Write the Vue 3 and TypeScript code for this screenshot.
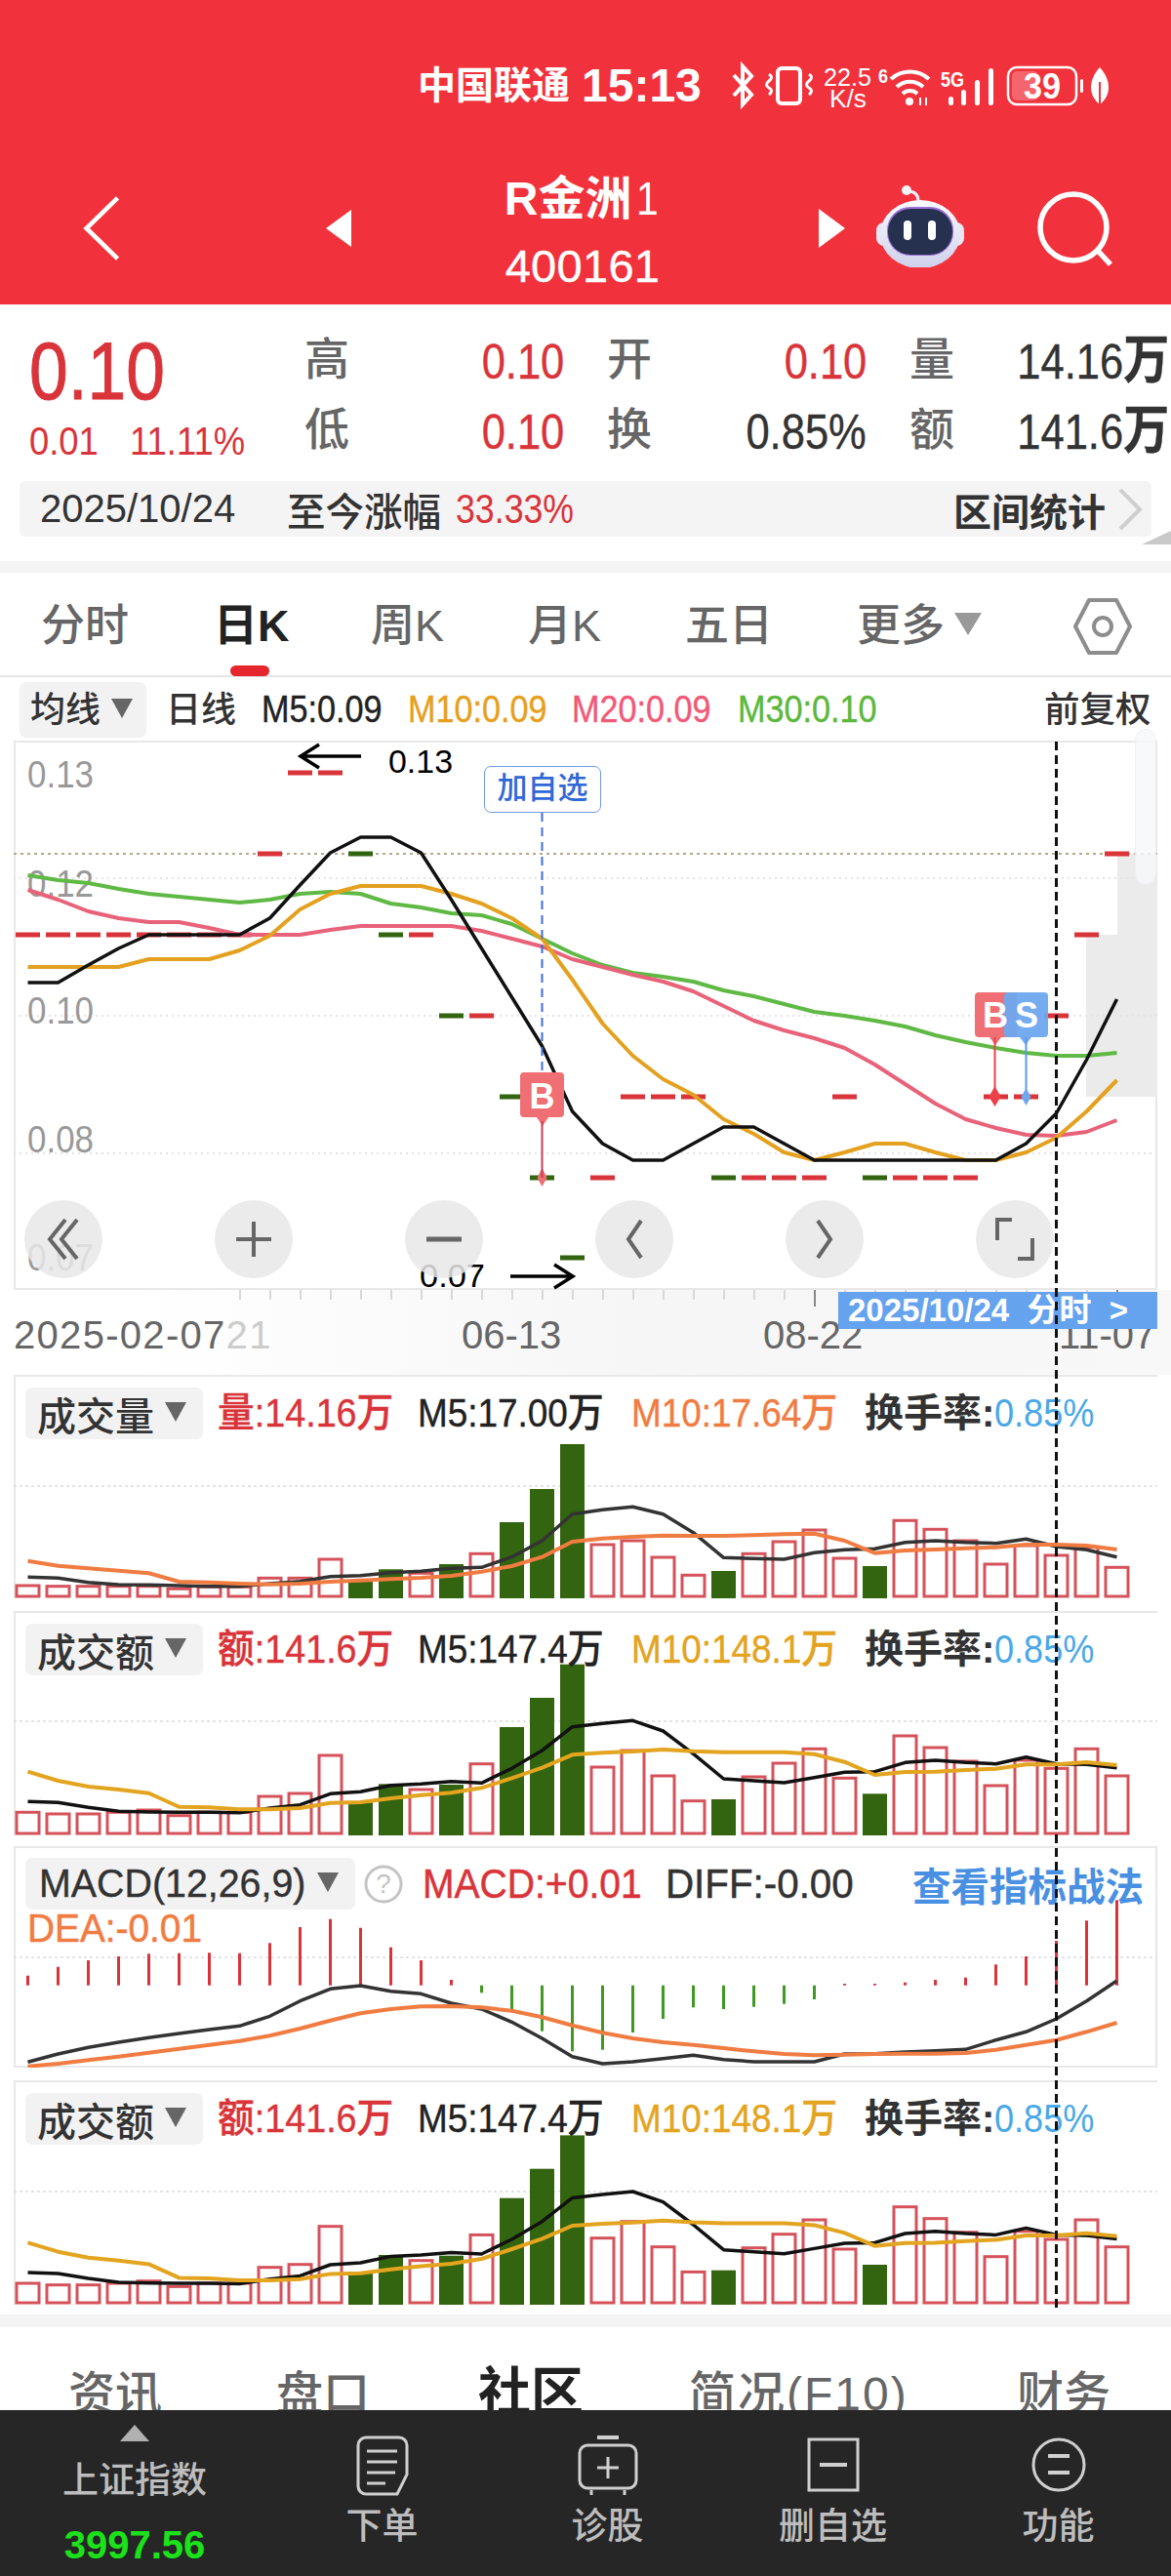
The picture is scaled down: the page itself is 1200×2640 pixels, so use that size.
<script setup lang="ts">
const xAt = (i: number) => 28.5 + 31 * i
const pts = (ys: number[]) => ys.map((y, i) => `${xAt(i)},${y}`).join(' ')
const zy = (base: number, shift = 0) => (v: number) => Math.round((base + v / 3 + shift) * 10) / 10

const levels = { p13: 793, p12: 876, p11: 959, p10: 1042, p09: 1125, p08: 1208, p07: 1290 }
const RED = '#d9343a'
const GRN = '#33640f'
const dashes: [number, number, string][] = [
  [levels.p13, 9, RED], [levels.p13, 10, RED],
  [levels.p12, 8, RED], [levels.p12, 11, GRN], [levels.p12, 36, RED],
  [levels.p11, 0, RED], [levels.p11, 1, RED], [levels.p11, 2, RED], [levels.p11, 3, RED], [levels.p11, 4, RED],
  [levels.p11, 5, RED], [levels.p11, 6, RED], [levels.p11, 7, RED], [levels.p11, 12, GRN], [levels.p11, 13, RED], [levels.p11, 35, RED],
  [levels.p10, 14, GRN], [levels.p10, 15, RED], [levels.p10, 34, RED],
  [levels.p09, 16, GRN], [levels.p09, 20, RED], [levels.p09, 21, RED], [levels.p09, 22, RED], [levels.p09, 27, RED], [levels.p09, 32, RED], [levels.p09, 33, RED],
  [levels.p08, 17, GRN], [levels.p08, 19, RED], [levels.p08, 23, GRN], [levels.p08, 24, RED], [levels.p08, 25, RED], [levels.p08, 26, RED],
  [levels.p08, 28, GRN], [levels.p08, 29, RED], [levels.p08, 30, RED], [levels.p08, 31, RED],
  [levels.p07, 18, GRN]
]
const dashRects = dashes.map(([y, i, c]) => ({ x: xAt(i) - 12.5, y: y - 2.5, c }))

const mainLines = [
  { c: '#5fb944', w: 4, d: [898,903,906,912,917,920,923,926,923,917,915,917,927,931,937,939,948,963,978,990,998,1002,1007,1016,1022,1030,1038,1042,1047,1053,1062,1069,1075,1080,1083,1083,1080] },
  { c: '#e8637a', w: 4, d: [913,923,935,942,946,946,952,959,959,959,954,950,950,950,950,955,963,971,984,992,1000,1007,1017,1032,1047,1057,1065,1075,1092,1112,1132,1148,1157,1164,1165,1161,1149] },
  { c: '#e4a11f', w: 4, d: [992,992,992,992,984,984,984,975,960,933,917,909,909,909,917,927,942,963,1005,1050,1083,1107,1123,1148,1163,1182,1190,1182,1173,1173,1182,1190,1190,1182,1167,1140,1108] },
  { c: '#111111', w: 3.5, d: [1008,1008,990,973,959,959,959,959,942,908,875,859,859,875,923,973,1023,1073,1140,1173,1190,1190,1173,1156,1156,1173,1190,1190,1190,1190,1190,1190,1190,1173,1142,1087,1025] }
]

const greens = new Set([11, 12, 14, 16, 17, 18, 23, 28])
const axisMarks = [
  { t: '0.13', y: 808 }, { t: '0.12', y: 920 }, { t: '0.10', y: 1050 }, { t: '0.08', y: 1182 }, { t: '0.07', y: 1303 }
]
const ticks = Array.from({ length: 30 }, (_, i) => 246 + 31 * i)

const volTops = [678,680,680,680,680,688,682,682,655,655,597,660,628,640,612,580,483,381,243,552,540,591,646,633,580,543,507,594,618,478,505,540,612,555,585,560,622]
const volM5 = [652,655,668,675,676,678,680,680,672,665,650,647,638,634,625,622,590,540,458,445,436,458,515,592,595,597,577,568,565,545,540,545,548,535,558,568,590]
const volM10 = [602,617,625,632,640,666,668,672,674,672,666,662,658,654,648,635,618,590,543,533,528,524,525,525,523,520,518,540,578,570,567,563,560,552,552,555,567]
const amtTops = [1375,1380,1380,1375,1368,1385,1375,1375,1326,1317,1200,1345,1288,1305,1290,1226,1113,1023,920,1236,1185,1263,1340,1335,1266,1224,1180,1270,1318,1140,1176,1218,1293,1215,1240,1180,1263]
const amtM5 = [1342,1345,1360,1372,1374,1375,1375,1376,1362,1352,1318,1312,1292,1288,1280,1285,1240,1185,1112,1102,1093,1125,1195,1272,1278,1284,1268,1252,1250,1222,1215,1222,1226,1205,1226,1228,1238]
const amtM10 = [1250,1278,1296,1305,1316,1358,1360,1366,1366,1362,1346,1344,1332,1322,1315,1300,1270,1238,1198,1192,1188,1182,1187,1190,1190,1190,1196,1220,1260,1251,1250,1245,1241,1228,1228,1221,1230]

function buildPanel(top: number, height: number, grid: number, tops: number[], m5: number[], m10: number[], shift: number, m5c: string, m10c: string) {
  const f = zy(1400, shift)
  const base = top + height - 2
  return {
    viewBox: `14 ${top} 1172 ${height}`, top, height, grid, base,
    bars: tops.map((t, i) => ({ x: xAt(i) - 11.5, y: f(t), h: base - f(t), green: greens.has(i), gx: xAt(i) - 12.5 })),
    m5: pts(m5.map(f)), m10: pts(m10.map(f)), m5c, m10c
  }
}

const vol = buildPanel(1410, 229, 1524, volTops, volM5, volM10, 0, '#333333', '#f07c42')
const amt = buildPanel(1652, 230, 1765, amtTops, amtM5, amtM10, 0, '#111111', '#e3a41f')
const amt2 = buildPanel(2133, 230, 2247, amtTops, amtM5, amtM10, 482.7, '#111111', '#e3a41f')

const amtHead = { title: '成交额', a: '额:141.6万', b: 'M5:147.4万', c: 'M10:148.1万', cClass: 'amber' }
const panels = [
  { ...vol, cls: 'p1', title: '成交量', a: '量:14.16万', b: 'M5:17.00万', c: 'M10:17.64万', cClass: 'orange' },
  { ...amt, cls: 'p2', ...amtHead },
  { ...amt2, cls: 'p4', ...amtHead }
]
const panelTop = panels.slice(0, 2)
const panelBottom = panels.slice(2)

const mf = zy(1880)
const macdTips = [437,410,390,378,370,368,367,368,337,288,263,290,350,390,450,490,540,608,670,665,612,570,535,540,533,524,510,462,462,458,450,443,403,378,330,268,205]
const macdBars = macdTips.map((t, i) => ({
  x: xAt(i), y1: mf(467), y2: mf(t), c: t > 467 ? '#3f9a24' : '#d9343a'
}))
const diff = pts([703,678,658,642,628,615,603,592,562,515,478,468,485,493,522,540,580,630,686,708,702,692,682,695,702,702,702,678,677,672,668,664,635,610,570,515,453].map(mf))
const dea = pts([716,708,697,686,674,662,650,638,622,600,575,553,540,532,531,535,545,565,590,613,630,642,650,660,670,678,682,680,678,677,677,675,665,650,635,610,582].map(mf))

const tabs = ['分时', '日K', '周K', '月K', '五日']
const bottomTabs = ['资讯', '盘口', '社区', '简况(F10)', '财务']
</script>

<template>
  <div class="page">
    <header class="top">
      <div class="status">
        <span class="carrier">中国联通</span>
        <span class="clock">15:13</span>
        <svg class="status-icons" viewBox="745 60 400 55" width="400" height="55">
          <path d="M752 77 L770 97 L761 107 V68 L770 78 L752 98" fill="none" stroke="#fff" stroke-width="4" />
          <rect x="797" y="70" width="23" height="36" rx="4" fill="none" stroke="#fff" stroke-width="4" />
          <path d="M788 76 q5 3 0 7 q-5 4 0 7 q5 3 0 7 M829 76 q5 3 0 7 q-5 4 0 7 q5 3 0 7" fill="none" stroke="#fff" stroke-width="3" />
          <text x="844" y="88" class="st-small" textLength="49" lengthAdjust="spacingAndGlyphs">22.5</text>
          <text x="850" y="110" class="st-small" textLength="38" lengthAdjust="spacingAndGlyphs">K/s</text>
          <text x="900" y="85" class="st-six" textLength="10" lengthAdjust="spacingAndGlyphs">6</text>
          <path d="M913 81 a29 29 0 0 1 39 0 M919 89 a20 20 0 0 1 27 0 M925 96 a11 11 0 0 1 15 0" fill="none" stroke="#fff" stroke-width="4" />
          <circle cx="932" cy="104" r="4" fill="#fff" />
          <path d="M943 100 v8 M949 100 v8" stroke="#fff" stroke-width="2" />
          <text x="964" y="89" class="st-five" textLength="24" lengthAdjust="spacingAndGlyphs">5G</text>
          <g fill="#fff">
            <rect x="972" y="99" width="5" height="9" rx="2.5" />
            <rect x="985" y="92" width="5" height="16" rx="2.5" />
            <rect x="999" y="82" width="5" height="26" rx="2.5" />
            <rect x="1013" y="70" width="5" height="38" rx="2.5" />
          </g>
          <rect x="1033" y="69" width="70" height="38" rx="9" fill="none" stroke="#fff" stroke-width="2.5" />
          <rect x="1037" y="73" width="27" height="30" rx="5" fill="#fff" fill-opacity=".25" />
          <text x="1068" y="101" text-anchor="middle" class="st-batt" textLength="38" lengthAdjust="spacingAndGlyphs">39</text>
          <rect x="1107" y="81" width="3" height="14" rx="1.5" fill="#fff" />
          <path d="M1127 69 C1139 82 1139 98 1127 107 C1115 98 1115 82 1127 69 Z" fill="#fff" />
          <path d="M1127 84 V107" stroke="#f1323c" stroke-width="2" />
        </svg>
      </div>
      <div class="title-row">
        <svg class="back" viewBox="0 0 46 74" width="46" height="74"><path d="M40 3 L5 37 L40 71" fill="none" stroke="#fff" stroke-width="5" /></svg>
        <span class="tri tri-l"></span>
        <div class="title">
          <div class="name"><b>R金洲</b><span>1</span></div>
          <div class="code">400161</div>
        </div>
        <span class="tri tri-r"></span>
        <svg class="robot" viewBox="0 0 90 84" width="90" height="84">
          <defs>
            <linearGradient id="rb" x1="0" y1="0" x2="0" y2="1"><stop offset="0" stop-color="#fbfbff" /><stop offset="1" stop-color="#cfd0ea" /></linearGradient>
          </defs>
          <path d="M43 16 C43 8 38 6 32 6" fill="none" stroke="#eeeef8" stroke-width="3" />
          <circle cx="31" cy="5" r="5" fill="#f3f3fa" />
          <rect x="0" y="38" width="90" height="24" rx="8" fill="#e6e6f4" />
          <ellipse cx="45" cy="50" rx="41" ry="35" fill="url(#rb)" />
          <rect x="11" y="22" width="68" height="50" rx="24" fill="#9a6fd8" />
          <rect x="12" y="24" width="66" height="47" rx="23" fill="#26304f" />
          <rect x="28" y="36" width="8" height="20" rx="4" fill="#fff" />
          <rect x="53" y="36" width="8" height="20" rx="4" fill="#fff" />
        </svg>
        <svg class="search" viewBox="0 0 84 84" width="84" height="84"><circle cx="40" cy="40" r="34" fill="none" stroke="#fff" stroke-width="5.5" /><path d="M65 64 L78 78" stroke="#fff" stroke-width="5.5" /></svg>
      </div>
    </header>

    <section class="quote">
      <div class="quote-top">
        <div class="price">
          <div class="big">0.10</div>
          <div class="chg"><span>0.01</span><span>11.11%</span></div>
        </div>
        <div class="stats">
          <span class="lb">高</span><span class="v pad"><span class="vi red">0.10</span></span>
          <span class="lb">开</span><span class="v pad"><span class="vi red">0.10</span></span>
          <span class="lb">量</span><span class="v"><span class="vi dark">14.16<b>万</b></span></span>
          <span class="lb">低</span><span class="v pad"><span class="vi red">0.10</span></span>
          <span class="lb">换</span><span class="v pad"><span class="vi dark">0.85%</span></span>
          <span class="lb">额</span><span class="v"><span class="vi dark">141.6<b>万</b></span></span>
        </div>
      </div>
      <div class="range">
        <span class="r-date">2025/10/24</span>
        <span class="r-label">至今涨幅</span>
        <span class="r-pct">33.33%</span>
        <b class="r-stat">区间统计</b>
        <svg class="r-chev" viewBox="0 0 26 44" width="26" height="44"><path d="M3 2 L23 22 L3 42" fill="none" stroke="#cfcfcf" stroke-width="4" /></svg>
        <span class="r-corner"></span>
      </div>
    </section>

    <div class="sep"></div>

    <nav class="tabs">
      <span v-for="(t, i) in tabs" :key="t" :class="['tab', { on: i === 1 }]">{{ t }}</span>
      <span class="tab more">更多<i class="caret"></i></span>
      <svg class="hex" viewBox="0 0 60 60" width="60" height="60"><path d="M16 3 H44 L58 30 L44 57 H16 L2 30 Z" fill="none" stroke="#8d8d8d" stroke-width="4" stroke-linejoin="round" /><circle cx="30" cy="30" r="9" fill="none" stroke="#8d8d8d" stroke-width="4" /></svg>
      <i class="tab-mark"></i>
    </nav>

    <div class="ind-row">
      <span class="chip ma">均线<i class="drop"></i></span>
      <span class="ind-day">日线</span>
      <span class="nm ma5">M5:0.09</span>
      <span class="nm ma10">M10:0.09</span>
      <span class="nm ma20">M20:0.09</span>
      <span class="nm ma30">M30:0.10</span>
      <span class="adj">前复权</span>
    </div>

    <div class="main-chart">
      <svg class="canvas" viewBox="14 760 1172 563" width="1172" height="563">
        <path d="M1145 876 H1186 V1125 H1113 V959 H1145 Z" fill="#ebebeb" />
        <line x1="14" y1="876" x2="1186" y2="876" stroke="#b7a88a" stroke-width="2" stroke-dasharray="3 4" />
        <g stroke="#e4e4e4" stroke-width="2" stroke-dasharray="2 4">
          <line x1="14" y1="901" x2="1186" y2="901" />
          <line x1="14" y1="1042" x2="1186" y2="1042" />
          <line x1="14" y1="1183" x2="1186" y2="1183" />
        </g>
        <text v-for="m in axisMarks" :key="m.t" x="28" :y="m.y" class="axis-val" textLength="68" lengthAdjust="spacingAndGlyphs">{{ m.t }}</text>
        <rect v-for="(d, i) in dashRects" :key="i" :x="d.x" :y="d.y" width="25" height="5" :fill="d.c" />
        <polyline v-for="l in mainLines" :key="l.c" :points="pts(l.d)" fill="none" :stroke="l.c" :stroke-width="l.w" stroke-linejoin="round" />
        <line x1="555.5" y1="834" x2="555.5" y2="1100" stroke="#3f6fd8" stroke-width="2" stroke-dasharray="9 6" />
        <path d="M370 776 H309 M327 764 L308 776 L327 788" fill="none" stroke="#000" stroke-width="3.5" />
        <text x="398" y="793" class="note" textLength="66" lengthAdjust="spacingAndGlyphs">0.13</text>
        <text x="430" y="1320" class="note" textLength="67" lengthAdjust="spacingAndGlyphs">0.07</text>
        <path d="M523 1309 H586 M568 1297 L587 1309 L568 1321" fill="none" stroke="#000" stroke-width="3.5" />

        <g fill="#ef6f74">
          <path d="M533 1104 a4 4 0 0 1 4 -4 h37 a4 4 0 0 1 4 4 v38 a4 4 0 0 1 -4 4 h-12 l-6 9 l-6 -9 h-13 a4 4 0 0 1 -4 -4 Z" />
          <path d="M555.5 1198 l5 10 l-5 9 l-5 -9 Z" />
          <line x1="555.5" y1="1150" x2="555.5" y2="1208" stroke="#c93f55" stroke-width="2" />
          <path d="M999 1022 a4 4 0 0 1 4 -4 h35 a4 4 0 0 1 4 4 v38 a4 4 0 0 1 -4 4 h-12 l-6 8 l-6 -8 h-11 a4 4 0 0 1 -4 -4 Z" />
        </g>
        <text x="555.5" y="1137" text-anchor="middle" class="bs">B</text>
        <line x1="1019.5" y1="1064" x2="1019.5" y2="1125" stroke="#ee4048" stroke-width="2" />
        <path d="M1019.5 1114 l6 11 l-6 10 l-6 -10 Z" fill="#ee4048" />
        <g fill="#6da8ee" fill-opacity=".95">
          <path d="M1029 1022 a4 4 0 0 1 4 -4 h37 a4 4 0 0 1 4 4 v38 a4 4 0 0 1 -4 4 h-13 l-6 8 l-6 -8 h-12 a4 4 0 0 1 -4 -4 Z" />
        </g>
        <line x1="1051.5" y1="1064" x2="1051.5" y2="1125" stroke="#5b9ae8" stroke-width="2" />
        <path d="M1051.5 1116 l5 9 l-5 9 l-5 -9 Z" fill="#6da8ee" />
        <text x="1020" y="1054" text-anchor="middle" class="bs">B</text>
        <text x="1052" y="1054" text-anchor="middle" class="bs">S</text>
      </svg>
      <span class="add-tag">加自选</span>
      <span class="scroll-blob"></span>
      <div class="ctrl-row">
        <span class="ctrl"><svg viewBox="0 0 40 50" width="40" height="50"><path d="M22 5 L6 25 L22 45 M34 5 L18 25 L34 45" fill="none" stroke="#666" stroke-width="4" /></svg></span>
        <span class="ctrl"><svg viewBox="0 0 40 40" width="40" height="40"><path d="M20 2 V38 M2 20 H38" fill="none" stroke="#666" stroke-width="4" /></svg></span>
        <span class="ctrl"><svg viewBox="0 0 40 40" width="40" height="40"><path d="M2 20 H38" fill="none" stroke="#666" stroke-width="5" /></svg></span>
        <span class="ctrl"><svg viewBox="0 0 30 44" width="30" height="44"><path d="M22 3 L9 22 L22 41" fill="none" stroke="#666" stroke-width="4" /></svg></span>
        <span class="ctrl"><svg viewBox="0 0 30 44" width="30" height="44"><path d="M8 3 L21 22 L8 41" fill="none" stroke="#666" stroke-width="4" /></svg></span>
        <span class="ctrl"><svg viewBox="0 0 46 46" width="46" height="46"><path d="M20 3 H5 V24 M26 43 H41 V22" fill="none" stroke="#666" stroke-width="4" /></svg></span>
      </div>
    </div>

    <div class="axis">
      <svg class="ticks" viewBox="14 0 1172 20" width="1172" height="20">
        <line v-for="t in ticks" :key="t" :x1="t" y1="0" :x2="t" :y2="t === 524 || t === 835 || t === 1145 ? 17 : 10" :stroke="t === 524 || t === 835 || t === 1145 ? '#888' : '#d8d8d8'" stroke-width="2" />
      </svg>
      <span class="d d0">2025-02-07<em>21</em></span>
      <span class="d d1">06-13</span>
      <span class="d d2">08-22</span>
      <span class="d d3">11-07</span>
      <span class="axis-tag">2025/10/24&nbsp; 分时 &nbsp;&gt;</span>
    </div>

    <div v-for="p in panelTop" :key="p.cls" :class="['panel', p.cls]">
      <svg class="canvas" :viewBox="p.viewBox" width="1172" :height="p.height">
        <line x1="14" :y1="p.grid" x2="1186" :y2="p.grid" stroke="#dcdcdc" stroke-width="1.5" stroke-dasharray="3 3" />
        <template v-for="(b, i) in p.bars" :key="i">
          <rect v-if="b.green" :x="b.gx" :y="b.y" width="25" :height="b.h + 2" fill="#33640f" />
          <rect v-else :x="b.x" :y="b.y" width="23" :height="b.h" fill="#fff" stroke="#d5525a" stroke-width="3" />
        </template>
        <polyline :points="p.m5" fill="none" :stroke="p.m5c" stroke-width="3.5" stroke-linejoin="round" />
        <polyline :points="p.m10" fill="none" :stroke="p.m10c" stroke-width="4" stroke-linejoin="round" />
      </svg>
      <div class="p-head">
        <span class="chip pc">{{ p.title }}<i class="drop"></i></span>
        <span class="pv a">{{ p.a }}</span>
        <span class="pv b">{{ p.b }}</span>
        <span :class="['pv', 'c', p.cClass]">{{ p.c }}</span>
        <span class="pv e"><b>换手率:</b><em>0.85%</em></span>
      </div>
    </div>

    <div class="panel macd">
      <svg class="canvas" viewBox="14 1893 1172 227" width="1172" height="227">
        <line x1="14" y1="2007" x2="1186" y2="2007" stroke="#dcdcdc" stroke-width="1.5" stroke-dasharray="3 3" />
        <line v-for="(b, i) in macdBars" :key="i" :x1="b.x" :y1="b.y1" :x2="b.x" :y2="b.y2" :stroke="b.c" stroke-width="3" />
        <polyline :points="diff" fill="none" stroke="#333" stroke-width="3.5" stroke-linejoin="round" />
        <polyline :points="dea" fill="none" stroke="#f07c42" stroke-width="4" stroke-linejoin="round" />
      </svg>
      <div class="m-head">
        <span class="chip mc"><span class="mc-t">MACD(12,26,9)</span><i class="drop"></i></span>
        <svg class="help" viewBox="0 0 40 40" width="40" height="40"><circle cx="20" cy="20" r="18" fill="none" stroke="#c4c4c4" stroke-width="3" /><text x="20" y="29" text-anchor="middle" class="q">?</text></svg>
        <span class="mv red">MACD:+0.01</span>
        <span class="mv ink">DIFF:-0.00</span>
        <b class="howto">查看指标战法</b>
      </div>
      <div class="dea">DEA:-0.01</div>
    </div>

    <div v-for="p in panelBottom" :key="p.cls" :class="['panel', p.cls]">
      <svg class="canvas" :viewBox="p.viewBox" width="1172" :height="p.height">
        <line x1="14" :y1="p.grid" x2="1186" :y2="p.grid" stroke="#dcdcdc" stroke-width="1.5" stroke-dasharray="3 3" />
        <template v-for="(b, i) in p.bars" :key="i">
          <rect v-if="b.green" :x="b.gx" :y="b.y" width="25" :height="b.h + 2" fill="#33640f" />
          <rect v-else :x="b.x" :y="b.y" width="23" :height="b.h" fill="#fff" stroke="#d5525a" stroke-width="3" />
        </template>
        <polyline :points="p.m5" fill="none" :stroke="p.m5c" stroke-width="3.5" stroke-linejoin="round" />
        <polyline :points="p.m10" fill="none" :stroke="p.m10c" stroke-width="4" stroke-linejoin="round" />
      </svg>
      <div class="p-head">
        <span class="chip pc">{{ p.title }}<i class="drop"></i></span>
        <span class="pv a">{{ p.a }}</span>
        <span class="pv b">{{ p.b }}</span>
        <span :class="['pv', 'c', p.cClass]">{{ p.c }}</span>
        <span class="pv e"><b>换手率:</b><em>0.85%</em></span>
      </div>
    </div>

    <div class="sep sep2"></div>

    <nav class="btabs">
      <span v-for="(t, i) in bottomTabs" :key="t" :class="['btab', 'bt' + i]">{{ t }}</span>
    </nav>

    <footer class="foot">
      <div class="index">
        <i class="up"></i>
        <span class="idx-name">上证指数</span>
        <span class="idx-val">3997.56</span>
      </div>
      <div class="act">
        <svg viewBox="0 0 54 62" width="54" height="62"><path d="M10 2 H44 a8 8 0 0 1 8 8 V40 L42 60 H10 a8 8 0 0 1 -8 -8 V10 a8 8 0 0 1 8 -8 Z" fill="none" stroke="#cfcfcf" stroke-width="3" /><path d="M11 16 H42 M11 27 H42 M11 38 H40 M11 49 H30" stroke="#cfcfcf" stroke-width="3" /></svg>
        <span>下单</span>
      </div>
      <div class="act">
        <svg viewBox="0 0 62 62" width="62" height="62"><path d="M20 2 H42" stroke="#cfcfcf" stroke-width="4" /><rect x="2" y="10" width="58" height="44" rx="8" fill="none" stroke="#cfcfcf" stroke-width="3" /><path d="M31 22 V44 M20 33 H42 M14 56 V61 M48 56 V61" stroke="#cfcfcf" stroke-width="3" /></svg>
        <span>诊股</span>
      </div>
      <div class="act">
        <svg viewBox="0 0 54 62" width="54" height="62"><rect x="2" y="4" width="50" height="52" fill="none" stroke="#cfcfcf" stroke-width="3" /><path d="M13 30 H41" stroke="#cfcfcf" stroke-width="4" /></svg>
        <span>删自选</span>
      </div>
      <div class="act">
        <svg viewBox="0 0 58 62" width="58" height="62"><circle cx="29" cy="30" r="26" fill="none" stroke="#cfcfcf" stroke-width="3" /><path d="M18 21 H40 M18 38 H40" stroke="#cfcfcf" stroke-width="4" /></svg>
        <span>功能</span>
      </div>
    </footer>

    <div class="cursor"></div>
  </div>
</template>

<style scoped>
.page {
  position: relative;
  width: 1200px;
  height: 2640px;
  overflow: hidden;
  background: #fff;
  font-family: "Liberation Sans", "Noto Sans CJK SC", sans-serif;
  color: #333;
}
.top { height: 312px; background: #f1323c; color: #fff; }
.status { height: 55px; padding-top: 60px; display: flex; align-items: center; padding-left: 428px; }
.carrier { font-size: 39px; font-weight: 700; line-height: 55px; width: 168px; white-space: nowrap; }
.clock { font-size: 48px; font-weight: 700; line-height: 55px; width: 149px; white-space: nowrap; }
.status-icons { display: block; }
.st-small { font-size: 26px; fill: #fff; }
.st-six { font-size: 20px; fill: #fff; font-weight: 700; }
.st-five { font-size: 22px; fill: #fff; font-weight: 700; }
.st-batt { font-size: 36px; fill: #fff; font-weight: 700; }
.title-row { display: flex; align-items: center; height: 126px; margin-top: 56px; padding-left: 84px; }
.back { width: 42px; flex: none; }
.tri { width: 0; height: 0; border-style: solid; flex: none; }
.tri-l { margin-left: 208px; border-width: 19px 26px 19px 0; border-color: transparent #fff transparent transparent; }
.title { width: 474px; text-align: center; color: #fff; flex: none; margin-top: 10px; }
.name { font-size: 48px; line-height: 56px; white-space: nowrap; }
.name b { font-weight: 700; }
.name span { margin-left: 3px; display: inline-block; transform: scaleX(.85); }
.code { font-size: 47px; line-height: 58px; margin-top: 12px; letter-spacing: 0.3px; -webkit-text-stroke: .4px #fff; }
.tri-r { margin-left: 5px; border-width: 20px 0 20px 27px; border-color: transparent transparent transparent #fff; }
.robot { margin-left: 32px; flex: none; margin-top: -4px; }
.search { margin-left: 72px; flex: none; margin-top: 2px; }

.quote { height: 263px; }
.quote-top { display: flex; height: 144px; padding-top: 20px; padding-left: 30px; box-sizing: content-box; }
.price { width: 282px; flex: none; color: #d9343a; }
.big { font-size: 84px; line-height: 96px; transform: scaleX(.85); transform-origin: left center; white-space: nowrap; -webkit-text-stroke: 1px #d9343a; }
.chg { display: flex; font-size: 40px; line-height: 44px; padding-top: 2px; white-space: nowrap; }
.chg span { width: 103px; flex: none; display: block; transform: scaleX(.91); transform-origin: left center; }
.stats { display: grid; grid-template-columns: 46px 264px 46px 264px 46px 220px; grid-auto-rows: 72px; align-items: center; }
.lb { font-size: 46px; line-height: 72px; color: #666; font-weight: 500; }
.v { display: flex; justify-content: flex-end; white-space: nowrap; padding-top: 6px; box-sizing: border-box; height: 72px; align-items: center; }
.v.pad { padding-right: 44px; }
.vi { display: block; font-size: 50px; line-height: 66px; transform: scaleX(.87); transform-origin: right center; -webkit-text-stroke: .4px currentColor; }
.vi b { font-size: 54px; font-weight: 700; line-height: 50px; }
.red { color: #d9343a; }
.dark { color: #333; }
.range { position: relative; margin: 17px 20px 0; height: 57px; background: #f4f4f4; border-radius: 6px; display: flex; align-items: center; padding-left: 21px; font-size: 40px; white-space: nowrap; }
.r-date { width: 253px; flex: none; }
.r-label { width: 173px; font-size: 39.5px; font-weight: 500; flex: none; }
.r-pct { width: 510px; flex: none; color: #d9343a; font-size: 42px; transform: scaleX(.85); transform-origin: left center; }
.r-stat { font-size: 39px; font-weight: 700; width: 156px; flex: none; }
.r-chev { margin-left: 12px; flex: none; }
.r-corner { position: absolute; right: -20px; bottom: -8px; width: 0; height: 0; border-style: solid; border-width: 0 0 14px 30px; border-color: transparent transparent #c9c9c9 transparent; }
.sep { height: 12px; background: #f4f4f4; }

.tabs { position: relative; height: 107px; box-sizing: border-box; border-bottom: 2px solid #e6e6e6; }
.tab { position: absolute; top: 27px; font-size: 45px; line-height: 56px; color: #666; white-space: nowrap; font-weight: 500; }
.tab:nth-child(1) { left: 42px; }
.tab:nth-child(2) { left: 219px; color: #222; font-weight: 700; }
.tab:nth-child(3) { left: 380px; }
.tab:nth-child(4) { left: 541px; }
.tab:nth-child(5) { left: 702px; }
.tab.more { left: 878px; display: flex; align-items: center; }
.caret { width: 0; height: 0; margin-left: 10px; border-style: solid; border-width: 23px 14px 0; border-color: #999 transparent transparent; margin-top: -6px; }
.hex { position: absolute; left: 1100px; top: 25px; }
.tab-mark { position: absolute; left: 236px; bottom: -1px; width: 40px; height: 11px; border-radius: 6px; background: #e5262d; }

.ind-row { position: relative; height: 65px; white-space: nowrap; font-size: 38px; }
.ind-row > span { position: absolute; top: 5px; line-height: 57px; }
.chip { background: #f2f2f2; border-radius: 7px; display: flex; align-items: center; color: #333; }
.drop { width: 0; height: 0; border-style: solid; border-width: 20px 11px 0; border-color: #666 transparent transparent; margin-left: 11px; margin-top: -4px; flex: none; }
.chip.ma { left: 20px; width: 130px; height: 57px; padding-left: 11px; box-sizing: border-box; font-size: 36px; font-weight: 500; }
.ind-day { left: 170px; font-size: 36px; font-weight: 500; }
.nm { transform: scaleX(.9); transform-origin: left center; -webkit-text-stroke: .4px currentColor; }
.ma5 { left: 268px; color: #222; }
.ma10 { left: 418px; color: #e6a01e; }
.ma20 { left: 586px; color: #f05a78; }
.ma30 { left: 756px; color: #5cb83c; }
.adj { left: 1070px; font-size: 36.5px; font-weight: 500; color: #333; }

.main-chart { position: relative; margin: 0 14px; width: 1172px; height: 563px; overflow: visible; box-shadow: inset 0 0 0 2px #e8e8e8; }
.canvas { position: absolute; left: 0; top: 0; display: block; }
.axis-val { font-size: 39px; fill: #999; }
.note { font-size: 33px; fill: #000; }
.bs { font-size: 36px; font-weight: 700; fill: #fff; }
.add-tag { position: absolute; left: 482px; top: 26px; width: 120px; height: 48px; box-sizing: border-box; border: 1.5px solid #6f9ae6; border-radius: 7px; background: #fff; color: #3068d8; font-size: 31px; font-weight: 500; line-height: 44px; text-align: center; }
.scroll-blob { position: absolute; left: 1149px; top: -12px; width: 22px; height: 160px; border-radius: 11px; background: #f7f8fb; border: 1px solid #eef0f5; box-sizing: border-box; opacity: .85; }
.ctrl-row { position: absolute; left: 11px; top: 471px; display: flex; gap: 115px; }
.ctrl { width: 80px; height: 80px; border-radius: 50%; background: rgba(232, 232, 232, .85); display: flex; align-items: center; justify-content: center; }

.axis { position: relative; height: 87px; background: linear-gradient(90deg, #fff 12%, #f6f6f6 55%, #f8f8f8 100%); }
.ticks { position: absolute; left: 14px; top: 0; }
.d { position: absolute; top: 22px; font-size: 40px; line-height: 48px; color: #666; white-space: nowrap; }
.d em { font-style: normal; color: #ccc; }
.d0 { left: 14px; letter-spacing: 1.3px; }
.d1 { left: 473px; }
.d2 { left: 782px; }
.d3 { left: 1085px; }
.axis-tag { position: absolute; left: 859px; top: 2px; width: 327px; height: 38px; box-sizing: border-box; padding-left: 10px; background: #66a3ee; color: #fff; font-size: 33px; line-height: 38px; font-weight: 700; white-space: nowrap; overflow: hidden; }

.panel { position: relative; margin: 0 14px; width: 1172px; box-shadow: inset 2px 2px 0 #e8e8e8; }
.p1 { height: 229px; }
.p2 { height: 230px; margin-top: 13px; }
.macd { height: 227px; margin-top: 11px; box-shadow: inset 0 0 0 2px #e8e8e8; }
.p4 { height: 230px; margin-top: 13px; }
.p-head { position: relative; display: flex; padding: 13px 0 0 12px; height: 53px; white-space: nowrap; align-items: center; box-sizing: content-box; }
.chip.pc { width: 182px; height: 53px; padding-left: 12px; box-sizing: border-box; font-size: 40px; font-weight: 500; flex: none; }
.pv { font-size: 41px; flex: none; line-height: 53px; font-weight: 500; transform-origin: left center; }
.pv.a { margin-left: 15px; width: 205px; color: #d9343a; transform: scaleX(.92); -webkit-text-stroke: .4px currentColor; }
.pv.b { width: 219px; color: #222; transform: scaleX(.9); -webkit-text-stroke: .4px currentColor; }
.pv.c { width: 239px; transform: scaleX(.9); -webkit-text-stroke: .4px currentColor; }
.orange { color: #f07c42; }
.amber { color: #e3a41f; }
.pv.e b { font-size: 40px; color: #333; font-weight: 700; }
.pv.e em { font-style: normal; color: #4aa8e8; display: inline-block; font-weight: 400; transform: scaleX(.88); transform-origin: left center; }
.m-head { position: relative; display: flex; align-items: center; padding: 12px 0 0 12px; height: 53px; white-space: nowrap; box-sizing: content-box; }
.chip.mc { width: 338px; height: 53px; padding-left: 14px; box-sizing: border-box; font-size: 41px; flex: none; -webkit-text-stroke: .4px currentColor; }
.mc-t { display: block; width: 285px; flex: none; transform: scaleX(.96); transform-origin: left center; }
.mc .drop { margin-left: 0; }
.help { margin-left: 9px; flex: none; }
.q { font-size: 28px; fill: #c4c4c4; }
.mv { font-size: 42px; flex: none; line-height: 53px; transform-origin: left center; -webkit-text-stroke: .5px currentColor; }
.mv.red { margin-left: 20px; width: 249px; transform: scaleX(.93); }
.mv.ink { width: 253px; color: #333; transform: scaleX(.96); }
.howto { color: #4a90e2; font-size: 39.5px; font-weight: 700; flex: none; }
.dea { position: relative; margin-left: 14px; margin-top: -3px; font-size: 40px; line-height: 44px; color: #f07c42; transform: scaleX(.97); transform-origin: left center; white-space: nowrap; -webkit-text-stroke: .5px currentColor; }

.sep2 { margin-top: 10px; height: 13px; }
.btabs { position: relative; height: 85px; overflow: hidden; }
.btab { position: absolute; top: 34px; font-size: 48px; line-height: 70px; color: #666; white-space: nowrap; font-weight: 500; }
.bt0 { left: 70px; }
.bt1 { left: 283px; }
.bt2 { left: 490px; top: 32px; font-size: 54px; font-weight: 700; color: #222; }
.bt3 { left: 706px; letter-spacing: 2px; }
.bt4 { left: 1042px; }

.foot { height: 170px; background: #262626; display: grid; grid-template-columns: 276px repeat(4, 231px); color: #bdbdbd; }
.index { position: relative; display: flex; flex-direction: column; align-items: center; }
.up { width: 0; height: 0; margin-top: 15px; border-style: solid; border-width: 0 15px 17px; border-color: transparent transparent #b0b0b0; }
.idx-name { font-size: 37px; line-height: 50px; margin-top: 16px; font-weight: 500; }
.idx-val { font-size: 40px; font-weight: 700; line-height: 46px; margin-top: 17px; color: #1be21b; }
.act { display: flex; flex-direction: column; align-items: center; padding-top: 26px; font-size: 37px; line-height: 50px; font-weight: 500; }
.act span { margin-top: 7px; }
.cursor { position: absolute; left: 1081px; top: 760px; width: 3px; height: 1605px; background: repeating-linear-gradient(180deg, #111 0 9px, transparent 9px 14px); }
</style>

<style>
html, body { margin: 0; padding: 0; background: #fff; }
</style>
